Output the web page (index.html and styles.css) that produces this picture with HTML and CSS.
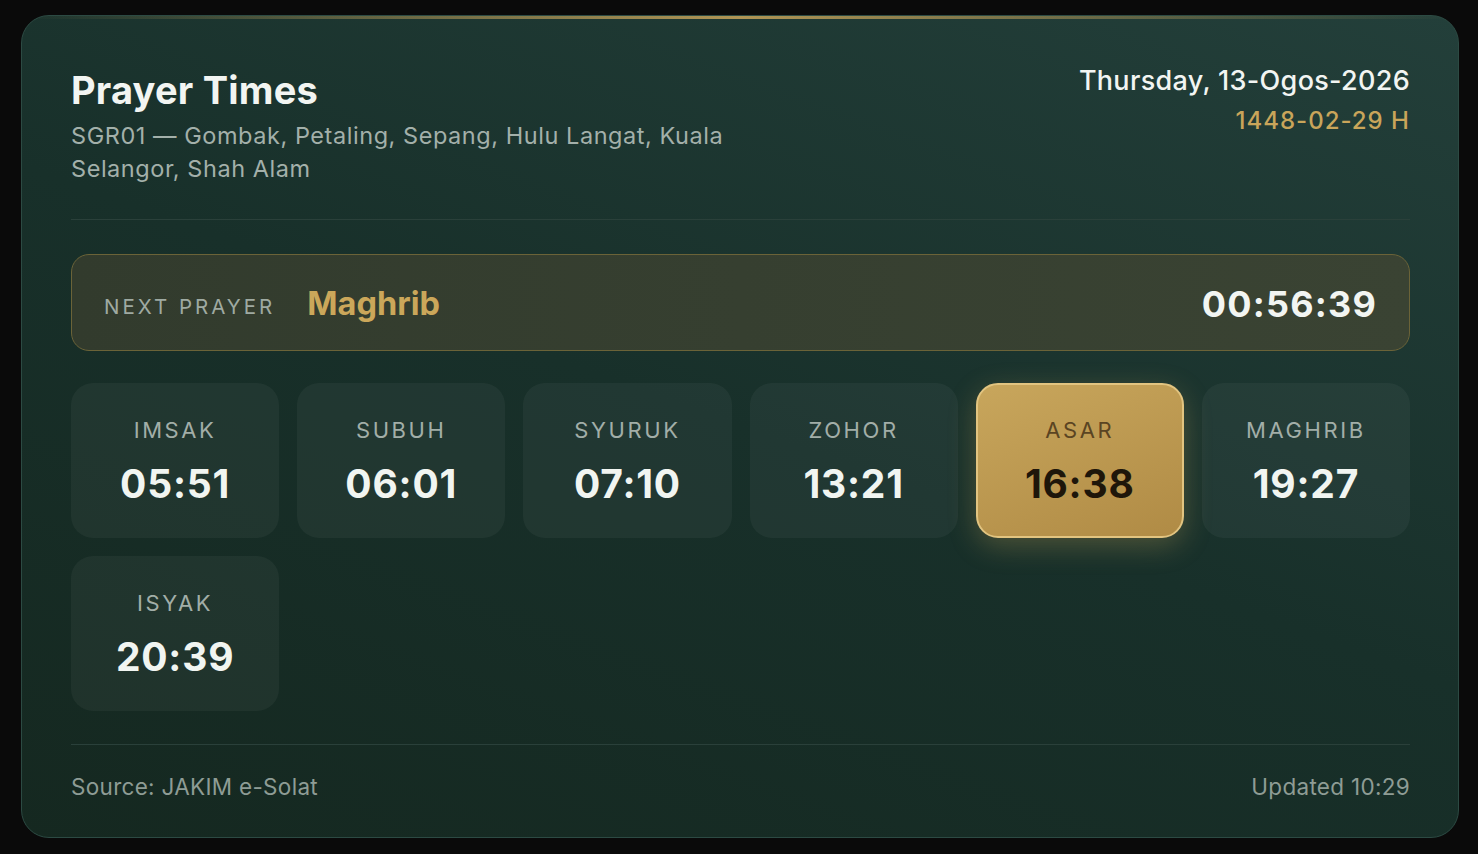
FILE: index.html
```html
<!DOCTYPE html>
<html lang="ms">
<head>
    <meta charset="UTF-8">
    <meta name="viewport" content="width=device-width, initial-scale=1.0">
    <title>Prayer Times</title>
    <link rel="stylesheet" href="styles.css">
</head>
<body>
    <div class="card">
        <div class="header">
            <div class="title-block">
                <h1>Prayer Times</h1>
                <div class="zone">SGR01 — Gombak, Petaling, Sepang, Hulu Langat, Kuala Selangor, Shah Alam</div>
            </div>
            <div class="date-block">
                <div class="date">Thursday, 13-Ogos-2026</div>
                <div class="hijri">1448-02-29 H</div>
            </div>
        </div>

        <div class="next-prayer">
            <div class="next-left">
                <span class="next-label">NEXT PRAYER</span>
                <span class="next-name">Maghrib</span>
            </div>
            <div class="countdown">00:56:39</div>
        </div>

        <div class="times-grid">
            <div class="time-card"><div class="time-label">IMSAK</div><div class="time-value">05:51</div></div>
            <div class="time-card"><div class="time-label">SUBUH</div><div class="time-value">06:01</div></div>
            <div class="time-card"><div class="time-label">SYURUK</div><div class="time-value">07:10</div></div>
            <div class="time-card"><div class="time-label">ZOHOR</div><div class="time-value">13:21</div></div>
            <div class="time-card active"><div class="time-label">ASAR</div><div class="time-value">16:38</div></div>
            <div class="time-card"><div class="time-label">MAGHRIB</div><div class="time-value">19:27</div></div>
            <div class="time-card"><div class="time-label">ISYAK</div><div class="time-value">20:39</div></div>
        </div>

        <div class="footer">
            <span>Source: JAKIM e-Solat</span>
            <span>Updated 10:29</span>
        </div>
    </div>
</body>
</html>
```

FILE: styles.css
```css
body {
    margin: 0;
    background: #0a0a0a;
    font-family: Inter, "Noto Sans", sans-serif;
    height: 100vh;
    padding: 15px 19px 16px 21px;
    box-sizing: border-box;
}
.card {
    position: relative;
    height: 100%;
    box-sizing: border-box;
    padding: 52px 48px 40px 49px;
    border: 1px solid #2c4a43;
    border-radius: 28px;
    background: linear-gradient(20deg, #152820 0%, #18302a 50%, #233f3a 100%);
    overflow: hidden;
    color: #f2f5f2;
}
.card::before {
    content: "";
    position: absolute;
    top: 0;
    left: 0;
    right: 0;
    height: 3px;
    background: linear-gradient(to right, rgba(201, 165, 90, 0), rgba(201, 165, 90, 0.85) 50%, rgba(201, 165, 90, 0));
}
.header {
    display: flex;
    justify-content: space-between;
    align-items: flex-start;
    padding-bottom: 34px;
    border-bottom: 1px solid #2a403a;
}
h1 {
    margin: 0 0 7px;
    font-size: 38px;
    font-weight: 700;
    line-height: 44px;
    letter-spacing: 0.2px;
}
.zone {
    max-width: 700px;
    font-size: 23.5px;
    line-height: 33px;
    letter-spacing: 0.55px;
    color: #a3b0aa;
}
.date-block {
    text-align: right;
    margin-top: -3px;
}
.date {
    font-size: 27px;
    font-weight: 500;
    line-height: 32px;
    letter-spacing: 0.3px;
}
.hijri {
    margin-top: 10px;
    font-size: 24px;
    font-weight: 500;
    line-height: 28px;
    letter-spacing: 1px;
    color: #c9a55a;
}
.next-prayer {
    margin-top: 34px;
    height: 97px;
    box-sizing: border-box;
    padding: 0 32px;
    display: flex;
    align-items: center;
    justify-content: space-between;
    border: 1px solid #6b6338;
    border-radius: 18px;
    background: linear-gradient(to right, #323b2d, #3a4333);
}
.next-left {
    display: flex;
    align-items: center;
    gap: 32px;
    padding-top: 2px;
}
.next-label {
    font-size: 20.5px;
    letter-spacing: 3px;
    color: #9faaa2;
    padding-top: 6px;
}
.next-name {
    font-size: 32.5px;
    font-weight: 700;
    color: #cba75a;
}
.countdown {
    font-size: 36px;
    font-weight: 700;
    letter-spacing: 1.2px;
    padding-top: 2px;
}
.times-grid {
    margin-top: 32px;
    display: grid;
    grid-template-columns: repeat(6, 1fr);
    grid-auto-rows: 155px;
    gap: 18px 18px;
}
.time-card {
    box-sizing: border-box;
    border-radius: 22px;
    background: rgba(255, 255, 255, 0.045);
    display: flex;
    flex-direction: column;
    align-items: center;
    justify-content: center;
    gap: 17px;
    padding-top: 2px;
}
.time-label {
    font-size: 22px;
    letter-spacing: 2.6px;
    color: #a2aea8;
    line-height: 28px;
}
.time-value {
    font-size: 39px;
    font-weight: 700;
    letter-spacing: 0.8px;
    line-height: 46px;
    color: #f1f5f1;
}
.time-card.active {
    background: linear-gradient(160deg, #c8a65c, #b08b45);
    border: 2px solid #e2c480;
    box-shadow: 0 8px 28px rgba(201, 165, 90, 0.3);
}
.time-card.active .time-label {
    color: #5a4422;
}
.time-card.active .time-value {
    color: #1e160a;
}
.footer {
    margin-top: 33px;
    padding-top: 28px;
    border-top: 1px solid #2a403a;
    display: flex;
    justify-content: space-between;
    font-size: 22.5px;
    letter-spacing: 0.3px;
    color: #8e9c95;
}
```
